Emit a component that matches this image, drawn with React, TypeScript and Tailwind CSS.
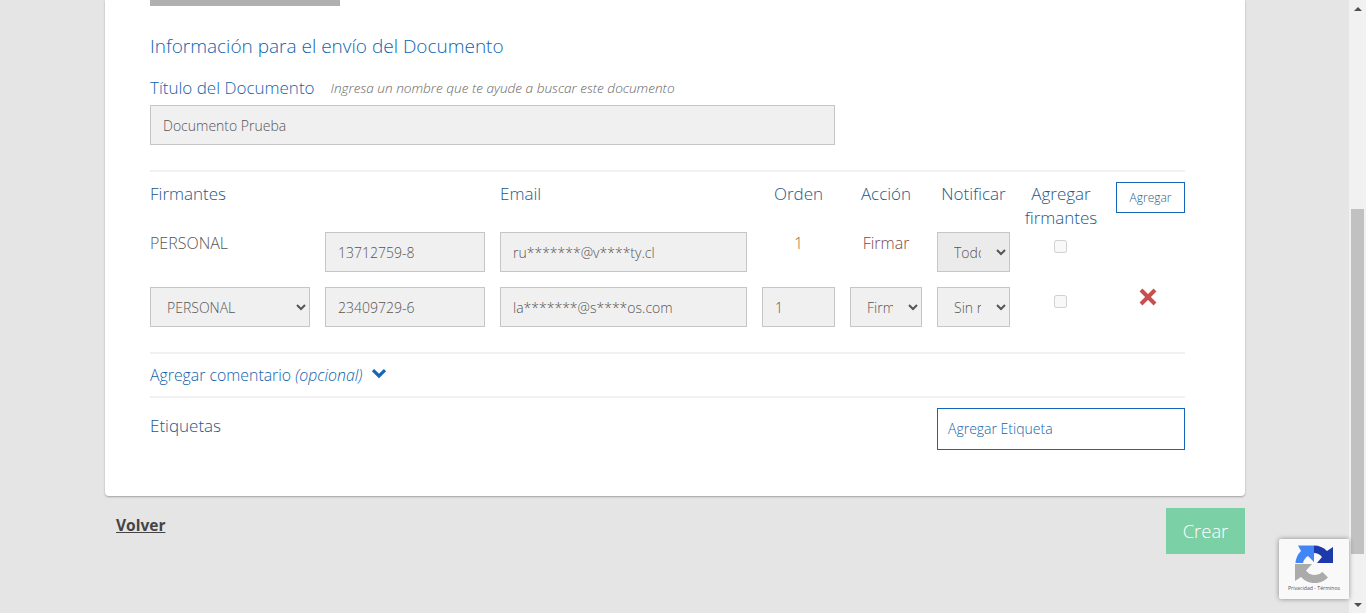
import React from "react";

const font = { fontFamily: '"Open Sans", "Noto Sans", sans-serif' };
const fieldCls =
  "h-10 w-full border border-[#c4c7c9] bg-[#f0f0f0] text-[14px] font-light text-[#555555] outline-none";

function Field({ value, className = "" }: { value: string; className?: string }) {
  return <input readOnly value={value} className={`${fieldCls} px-3 ${className}`} />;
}

function Sel({ value, className = "" }: { value: string; className?: string }) {
  return (
    <select defaultValue={value} className={`${fieldCls} px-3 ${className}`}>
      <option value={value}>{value}</option>
    </select>
  );
}

function Recaptcha() {
  return (
    <svg width="38" height="38" viewBox="0 0 38 38">
      <path d="M0 19 L17 19 L11 25.5 A11 11 0 0 0 27.5 27 L33 32.5 A18.5 18.5 0 0 1 6 32 L0 36 Z" fill="#ababab" />
      <path d="M0.5 18 A18.5 18.5 0 0 1 6 6 L3 0.5 L19 0.5 L19 17 L13 11 A11 11 0 0 0 8 18 Z" fill="#4285f4" />
      <path d="M19 0.5 A18.5 18.5 0 0 1 32 6 L38 2 L38 18 L22 18 L27 12 A11 11 0 0 0 19 8 Z" fill="#1c3aa9" />
    </svg>
  );
}

function Scrollbar() {
  return (
    <div className="flex h-full w-[17px] shrink-0 flex-col items-center bg-[#f1f1f1]">
      <div className="flex h-[17px] w-full items-center justify-center">
        <div className="h-0 w-0 border-x-[4px] border-b-[4px] border-x-transparent border-b-[#505050]" />
      </div>
      <div className="mt-[192px] h-[345px] w-[13px] bg-[#c1c1c1]" />
      <div className="mt-auto flex h-[17px] w-full items-center justify-center">
        <div className="h-0 w-0 border-x-[4px] border-t-[4px] border-x-transparent border-t-[#505050]" />
      </div>
    </div>
  );
}

const blue = "text-[#0f63ad]";
const head = "text-[#1d5788]";
const gridCls = "grid grid-cols-[160px_160px_247px_73px_72px_73px_72px_73px] gap-x-[15px]";

export default function App() {
  return (
    <div style={font} className="relative flex h-[613px] w-full overflow-hidden bg-[#e5e5e5]">
      <div className="min-w-0 flex-1 pl-[105px]">
        <div className="h-[496px] w-[1140px] rounded-b-[4px] bg-white pl-[45px] pr-[60px] shadow-[0_1px_2px_rgba(0,0,0,0.3)]">
          <div className="h-[6px] w-[190px] bg-[#b0b0b0]" />
          <h2 className={`mt-[27px] text-[19px] font-light leading-[27px] ${blue}`}>
            Información para el envío del Documento
          </h2>
          <div className="mt-[16px] flex h-[24px] items-center">
            <span className={`text-[17px] font-light ${blue}`}>Título del Documento</span>
            <span className="ml-4 text-[13.6px] font-light italic text-[#666666]">
              Ingresa un nombre que te ayude a buscar este documento
            </span>
          </div>
          <Field value="Documento Prueba" className="mt-[5px] !w-[685px]" />
          <div className="mt-[25px] h-[2px] bg-[#f1f1f1]" />

          <div className={`${gridCls} mt-[10px] text-[17px] font-light leading-[24px] ${head}`}>
            <div>Firmantes</div>
            <div />
            <div>Email</div>
            <div className="text-center">Orden</div>
            <div className="text-center">Acción</div>
            <div className="whitespace-nowrap text-center">Notificar</div>
            <div className="-mx-1 text-center">Agregar firmantes</div>
            <div className="flex justify-end">
              <button className="h-[31px] w-[69px] border border-[#1565b8] text-[12px] font-light text-[#2a5d8a]">
                Agregar
              </button>
            </div>
          </div>

          <div className={`${gridCls} mt-[2px]`}>
            <div className="text-[16px] font-light leading-[22px] text-[#555555]">PERSONAL</div>
            <Field value="13712759-8" />
            <Field value="ru*******@v****ty.cl" />
            <div className="text-center text-[16px] font-light leading-[22px] text-[#a8603c]">1</div>
            <div className="text-center text-[16px] font-light leading-[22px] text-[#7a4848]">Firmar</div>
            <Sel value="Todos" className="!bg-[#ebebeb]" />
            <div className="flex justify-center pr-[1px] pt-[8px]">
              <input type="checkbox" disabled className="h-[13px] w-[13px]" />
            </div>
            <div />
          </div>

          <div className={`${gridCls} mt-[15px]`}>
            <Sel value="PERSONAL" />
            <Field value="23409729-6" />
            <Field value="la*******@s****os.com" />
            <Field value="1" />
            <Sel value="Firmar" />
            <Sel value="Sin notificar" />
            <div className="flex justify-center pr-[1px] pt-[8px]">
              <input type="checkbox" disabled className="h-[13px] w-[13px]" />
            </div>
            <div className="flex justify-center pr-[1px]">
              <svg width="18" height="18" viewBox="0 0 18 18" className="mt-[1px]">
                <path d="M2 2 L16 16 M16 2 L2 16" stroke="#c94f4f" strokeWidth="4" fill="none" />
              </svg>
            </div>
          </div>

          <div className="mt-[25px] h-[2px] bg-[#f1f1f1]" />
          <div className={`flex h-[42px] items-center text-[15.85px] font-light ${blue}`}>
            <span className="pt-[2px]">Agregar comentario <em>(opcional)</em></span>
            <svg width="16" height="11" viewBox="0 0 16 11" className="ml-[9px] mb-[3px]">
              <path d="M2 2.2 L8 8 L14 2.2" stroke="#1565b8" strokeWidth="3.2" fill="none" />
            </svg>
          </div>
          <div className="h-[2px] bg-[#f1f1f1]" />
          <div className="mt-[10px] flex justify-between">
            <span className={`mt-[6px] text-[17px] font-light leading-[24px] ${head}`}>Etiquetas</span>
            <div className={`flex h-[42px] w-[248px] items-center border border-[#1565b8] px-[10px] pb-[2px] text-[14px] font-light ${blue}`}>
              Agregar Etiqueta
            </div>
          </div>
        </div>

        <div className="flex w-[1140px] items-start justify-between pl-[11px] pt-[12px]">
          <a className="mt-[6px] text-[15.5px] font-bold text-[#444444] underline">Volver</a>
          <button className="h-[46px] w-[79px] bg-[#7bd0a5] text-[18.4px] font-light text-white">Crear</button>
        </div>
      </div>
      <Scrollbar />

      <div className="absolute right-[17px] top-[539px] flex h-[60px] w-[70px] flex-col items-center rounded-l-[2px] bg-[#f9f9f9] pt-[6px] shadow-[0_0_5px_rgba(0,0,0,0.4)]">
        <Recaptcha />
        <span className="text-[5.2px] leading-[10px] text-[#555555]" style={{ fontFamily: '"Open Sans", sans-serif' }}>
          Privacidad - Términos
        </span>
      </div>
    </div>
  );
}
